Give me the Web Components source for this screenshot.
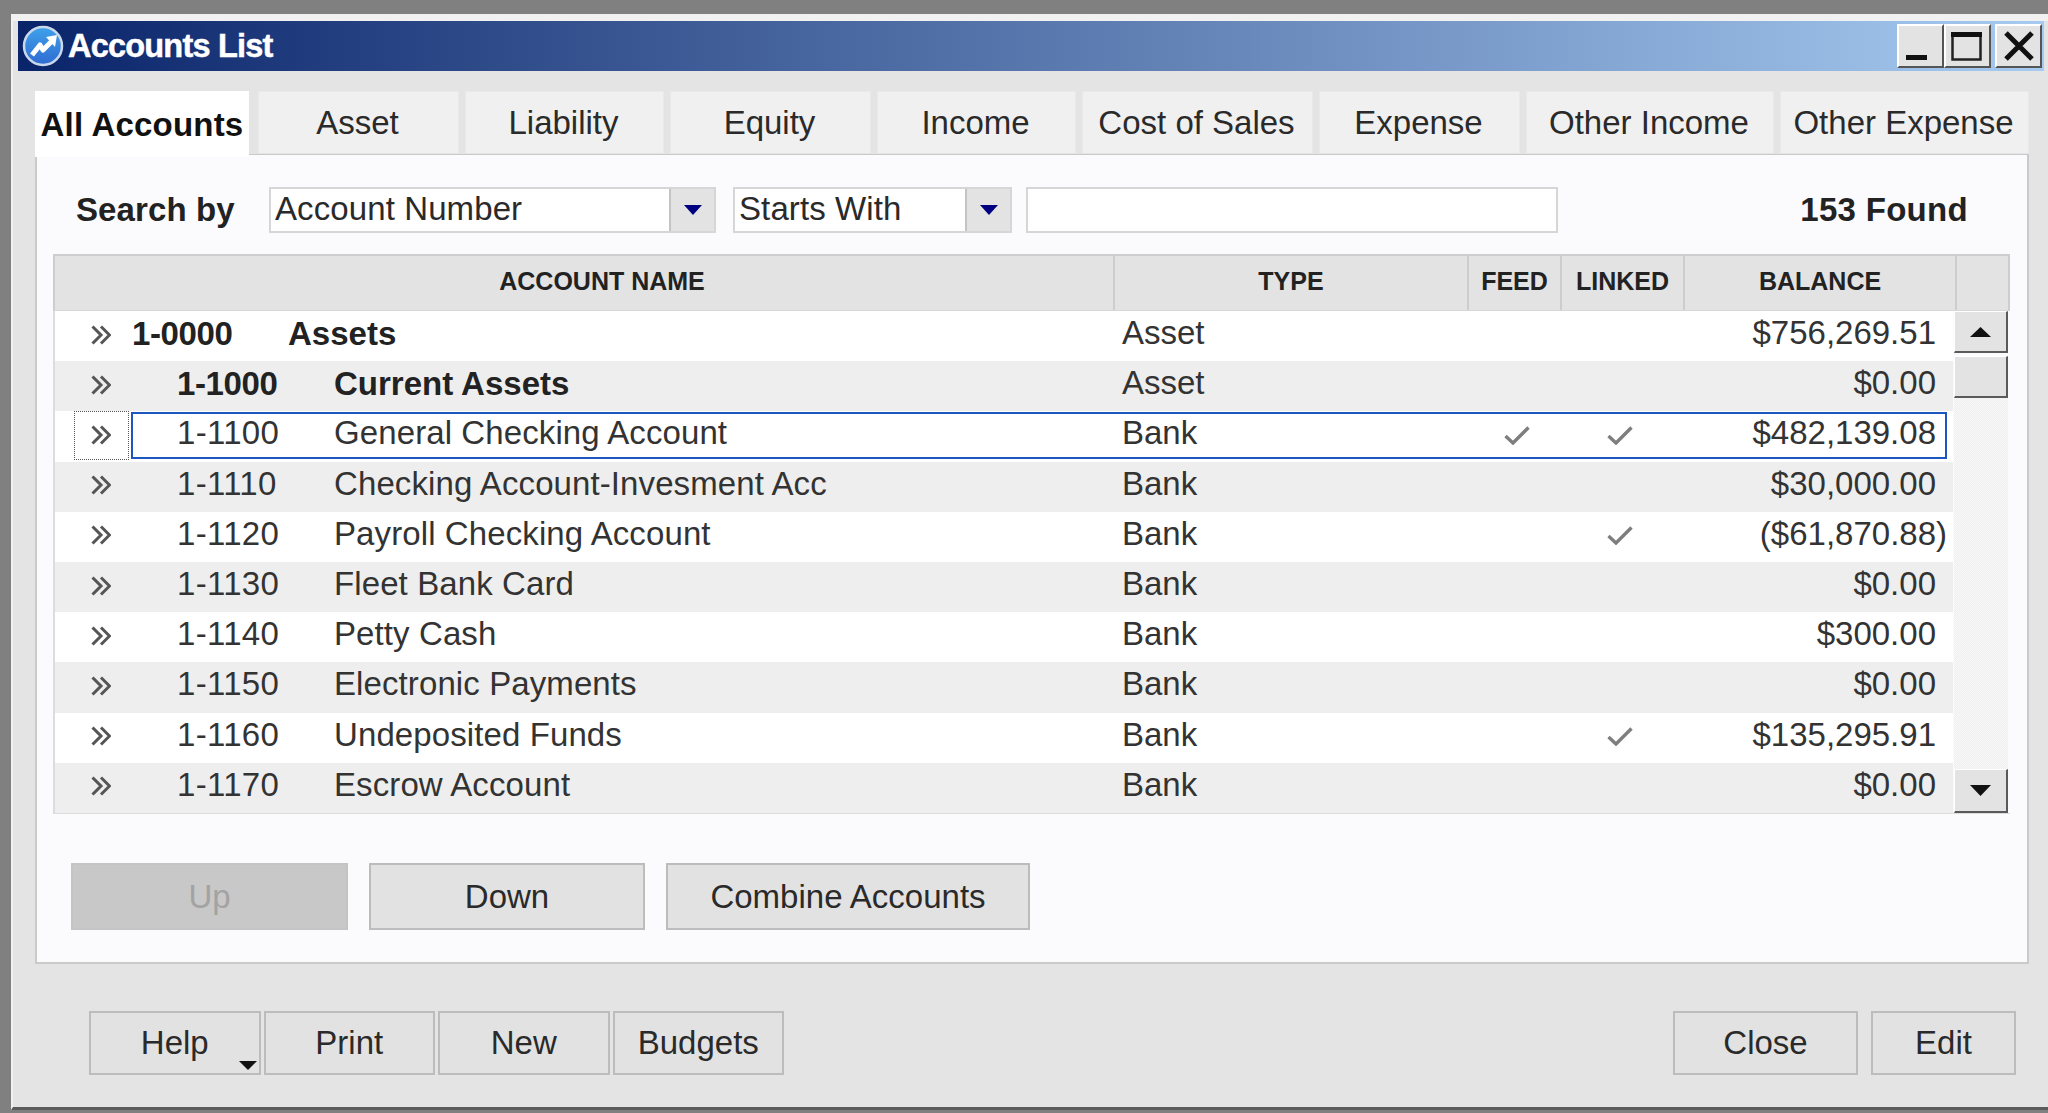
<!DOCTYPE html>
<html>
<head>
<meta charset="utf-8">
<title>Accounts List</title>
<style>
  html, body { margin: 0; height: 100%; overflow: hidden; }
  body { background: #808080; font: 33px "Liberation Sans", Arial, sans-serif; color: #222; }
</style>
</head>
<body>
<app-window heading="Accounts List">
  <tab-strip>
    <tab-item active style="--w:214px">All Accounts</tab-item>
    <tab-item style="--w:201px">Asset</tab-item>
    <tab-item style="--w:199px">Liability</tab-item>
    <tab-item style="--w:201px">Equity</tab-item>
    <tab-item style="--w:199px">Income</tab-item>
    <tab-item style="--w:231px">Cost of Sales</tab-item>
    <tab-item style="--w:201px">Expense</tab-item>
    <tab-item style="--w:248px">Other Income</tab-item>
    <tab-item style="--w:249px">Other Expense</tab-item>
  </tab-strip>
  <tab-panel>
    <search-bar found="153 Found"></search-bar>
    <account-table>
      <account-row level="1" number="1-0000" name="Assets" type="Asset" balance="$756,269.51"></account-row>
      <account-row level="2" number="1-1000" name="Current Assets" type="Asset" balance="$0.00"></account-row>
      <account-row selected number="1-1100" name="General Checking Account" type="Bank" feed linked balance="$482,139.08"></account-row>
      <account-row number="1-1110" name="Checking Account-Invesment Acc" type="Bank" balance="$30,000.00"></account-row>
      <account-row number="1-1120" name="Payroll Checking Account" type="Bank" linked negative balance="($61,870.88)"></account-row>
      <account-row number="1-1130" name="Fleet Bank Card" type="Bank" balance="$0.00"></account-row>
      <account-row number="1-1140" name="Petty Cash" type="Bank" balance="$300.00"></account-row>
      <account-row number="1-1150" name="Electronic Payments" type="Bank" balance="$0.00"></account-row>
      <account-row number="1-1160" name="Undeposited Funds" type="Bank" linked balance="$135,295.91"></account-row>
      <account-row number="1-1170" name="Escrow Account" type="Bank" balance="$0.00"></account-row>
    </account-table>
    <button-row style="--gap:21px;--left:18px;margin-top:49px">
      <ui-button disabled style="--w:277px;--h:67px">Up</ui-button>
      <ui-button style="--w:276px;--h:67px">Down</ui-button>
      <ui-button style="--w:364px;--h:67px">Combine Accounts</ui-button>
    </button-row>
  </tab-panel>
  <window-footer>
    <button-row slot="left" style="--gap:3px">
      <ui-button menu style="--w:171.5px;--h:64px">Help</ui-button>
      <ui-button style="--w:171.5px;--h:64px">Print</ui-button>
      <ui-button style="--w:171.5px;--h:64px">New</ui-button>
      <ui-button style="--w:171.5px;--h:64px">Budgets</ui-button>
    </button-row>
    <button-row slot="right" style="--gap:13px">
      <ui-button style="--w:185px;--h:64px">Close</ui-button>
      <ui-button style="--w:145px;--h:64px">Edit</ui-button>
    </button-row>
  </window-footer>
</app-window>

<script>
const shell = (el, html) => {
  const root = el.shadowRoot || el.attachShadow({ mode: "open" });
  root.innerHTML = html;
  return root;
};

class AppWindow extends HTMLElement {
  connectedCallback() {
    shell(this, `
      <style>
        :host {
          display: block;
          box-sizing: border-box;
          height: 1096px;
          margin: 14px 0 0 11px;
          background: #e4e4e4;
          border-top: 7px solid #f1f1f1;
          border-left: 2px solid #f1f1f1;
          border-bottom: 3px solid #5c5c5c;
        }
        header {
          display: flex;
          align-items: center;
          height: 50px;
          margin: 0 4px 20px 5px;
          background: linear-gradient(90deg, #0a246a, #a6caf0);
          color: #fff;
        }
        .logo { width: 44px; height: 44px; margin: 0 3px 0 3px; flex: none; }
        h1 {
          margin: 0;
          flex: 1;
          font: bold 32.5px/52px "Liberation Sans", Arial, sans-serif;
          letter-spacing: -.8px;
          -webkit-text-stroke: .5px #fff;
        }
        .caps { display: flex; margin-right: 2px; }
        .cap {
          box-sizing: border-box;
          width: 47px;
          height: 44px;
          background: #e3e3e3;
          border: 2px solid;
          border-color: #fff #555 #555 #fff;
          display: grid;
          place-items: center;
        }
        .cap.close { margin-left: 4px; }
        .cap svg { display: block; }
      </style>
      <header>
        <svg class="logo" viewBox="0 0 44 44">
          <defs><linearGradient id="lg" x1="0" y1="0" x2="0" y2="1"><stop offset="0" stop-color="#3fa2ea"/><stop offset="1" stop-color="#2f6bd2"/></linearGradient></defs>
          <circle cx="22" cy="22" r="19" fill="url(#lg)" stroke="#c9d8ea" stroke-width="2.5"/>
          <path d="M11 31 L19 21 L22 26 L30 18" fill="none" stroke="#fff" stroke-width="5" stroke-linejoin="round"/>
          <path d="M25 13 L36 11 L34 23 Z" fill="#fff"/>
        </svg>
        <h1>${this.getAttribute("heading")}</h1>
        <div class="caps">
          <div class="cap"><svg width="40" height="40" viewBox="0 0 40 40"><rect x="5" y="29" width="21" height="5" fill="#111"/></svg></div>
          <div class="cap"><svg width="40" height="40" viewBox="0 0 40 40"><path d="M4.5 7.5h28v26h-28z" fill="none" stroke="#222" stroke-width="2.5"/><rect x="3" y="6" width="31" height="5" fill="#111"/></svg></div>
          <div class="cap close"><svg width="40" height="40" viewBox="0 0 40 40"><path d="M7 7 L33 33 M33 7 L7 33" stroke="#111" stroke-width="5"/></svg></div>
        </div>
      </header>
      <slot></slot>
    `);
  }
}

class TabStrip extends HTMLElement {
  connectedCallback() {
    shell(this, `
      <style>
        :host { display: flex; gap: 6px; margin-left: 22px; height: 63px; position: relative; z-index: 1; align-items: flex-start; }
      </style>
      <slot></slot>
    `);
  }
}

class TabItem extends HTMLElement {
  connectedCallback() {
    shell(this, `
      <style>
        :host {
          display: block;
          box-sizing: border-box;
          flex: none;
          width: var(--w);
          height: 62px;
          padding-right: 2px;
          background: #f0f0f0;
          border: 1px solid #e9e9e9;
          border-bottom: 0;
          color: #2a2a2a;
          font-size: 33px;
          line-height: 62px;
          text-align: center;
          white-space: nowrap;
        }
        :host([active]) {
          height: 66px;
          padding-right: 0;
          background: #fff;
          border: 0;
          font-weight: bold;
          letter-spacing: .2px;
          line-height: 68px;
          color: #111;
          margin-right: 3px;
        }
      </style>
      <slot></slot>
    `);
  }
}

class TabPanel extends HTMLElement {
  connectedCallback() {
    shell(this, `
      <style>
        :host {
          display: block;
          box-sizing: border-box;
          width: 1994px;
          height: 810px;
          margin-left: 22px;
          padding: 32px 17px 0 16px;
          background: #fbfbfd;
          border: 2px solid #cacaca;
          border-top-width: 1px;
        }
      </style>
      <slot></slot>
    `);
  }
}

class ComboBox extends HTMLElement {
  connectedCallback() {
    shell(this, `
      <style>
        :host {
          display: flex;
          box-sizing: border-box;
          height: 46px;
          width: var(--w);
          background: #fff;
          border: 2px solid #d6d6d6;
          color: #2a2a2a;
        }
        .value { flex: 1; padding-left: 4px; line-height: 40px; font-size: 33px; white-space: nowrap; letter-spacing: .1px; }
        .drop {
          width: 43px;
          background: #e3e3e3;
          border-left: 2px solid #c4c4c4;
          display: grid;
          place-items: center;
        }
      </style>
      <div class="value"><slot></slot></div>
      <div class="drop"><svg width="18" height="10" viewBox="0 0 18 10"><path d="M0 0h18L9 10z" fill="#000080"/></svg></div>
    `);
  }
}

class SearchBar extends HTMLElement {
  connectedCallback() {
    shell(this, `
      <style>
        :host { display: flex; align-items: center; height: 46px; margin-bottom: 21px; }
        .label { width: 216px; padding-left: 23px; box-sizing: border-box; font-weight: bold; letter-spacing: .1px; color: #222; white-space: nowrap; }
        combo-box.a { --w: 447px; margin-right: 17px; }
        combo-box.b { --w: 279px; margin-right: 14px; }
        .text { box-sizing: border-box; width: 532px; height: 46px; background: #fff; border: 2px solid #d6d6d6; }
        .found { margin-left: auto; margin-right: 42px; font-weight: bold; letter-spacing: .3px; color: #222; white-space: nowrap; }
      </style>
      <div class="label">Search by</div>
      <combo-box class="a">Account Number</combo-box>
      <combo-box class="b">Starts With</combo-box>
      <div class="text"></div>
      <div class="found">${this.getAttribute("found")}</div>
    `);
  }
}

class AccountTable extends HTMLElement {
  connectedCallback() {
    shell(this, `
      <style>
        :host { display: block; box-sizing: border-box; width: 1957px; }
        .head {
          display: grid;
          grid-template-columns: 1060px 354px 93px 123px 272px 1fr;
          height: 57px;
          box-sizing: border-box;
          background: #e3e3e3;
          border: 2px solid #cdcdcd;
          border-bottom: 1px solid #d8d8d8;
          font: bold 25px/51px "Liberation Sans", Arial, sans-serif;
          color: #222;
          text-align: center;
        }
        .head div { border-right: 2px solid #cdcdcd; }
        .head div:first-child { padding-left: 36px; }
        .head div:last-child { border-right: 0; }
        .body { display: flex; height: 503px; box-sizing: border-box; border-bottom: 1px solid #dcdcdc; border-left: 2px solid #dcdcdc; }
        .rows { width: 1898px; flex: none; }
        scroll-rail { margin-left: 1px; }
      </style>
      <div class="head">
        <div>ACCOUNT NAME</div><div>TYPE</div><div>FEED</div><div>LINKED</div><div>BALANCE</div><div></div>
      </div>
      <div class="body">
        <div class="rows"><slot></slot></div>
        <scroll-rail></scroll-rail>
      </div>
    `);
  }
}

class AccountRow extends HTMLElement {
  connectedCallback() {
    const check = `<svg width="26" height="19" viewBox="0 0 26 19"><path d="M1.5 10 L9 17 L24.5 1.5" fill="none" stroke="#7e7e7e" stroke-width="3.4"/></svg>`;
    const level = this.getAttribute("level") || "3";
    shell(this, `
      <style>
        :host {
          display: grid;
          grid-template-columns: 77px 156px 825px 354px 100px 106px 280px;
          align-items: center;
          position: relative;
          height: 50.2px;
          background: #fff;
          color: #333;
          font-size: 33px;
          white-space: nowrap;
        }
        :host(:nth-child(even)) { background: #eeeeee; }
        .grip { margin: 0 0 3px 36px; display: block; width: 20px; height: 20px; }
        .num, .name, .type, .bal { padding-bottom: 6px; line-height: 38px; }
        .num { padding-left: ${level === "1" ? 0 : 45}px; letter-spacing: .3px; }
        .name { padding-left: ${level === "1" ? 0 : 46}px; letter-spacing: .1px; }
        .type { padding-left: 9px; }
        .mid { text-align: center; height: 19px; margin-top: -2px; }
        .mid svg { display: block; margin: 0 auto; }
        .bal { text-align: right; padding-right: 17px; }
        :host([negative]) .bal { padding-right: 6px; }
        :host([level]) .num, :host([level]) .name { font-weight: bold; color: #222; padding-bottom: 4px; letter-spacing: 0; }
        :host([level]) .num { letter-spacing: -.4px; }
        .sel { position: absolute; left: 76px; right: 6px; top: 1px; bottom: 3px; border: 2.5px solid #1e56c0; }
        .focus { position: absolute; left: 19px; width: 55px; top: 0; bottom: 2px; box-sizing: border-box; border: 1.5px dotted #555; }
      </style>
      ${this.hasAttribute("selected") ? `<div class="focus"></div><div class="sel"></div>` : ""}
      <svg class="grip" viewBox="0 0 20 20"><path d="M1.5 1.5 L10 10 L1.5 18.5 M10 1.5 L18.5 10 L10 18.5" fill="none" stroke="#555" stroke-width="3"/></svg>
      <div class="num">${this.getAttribute("number")}</div>
      <div class="name">${this.getAttribute("name")}</div>
      <div class="type">${this.getAttribute("type")}</div>
      <div class="mid">${this.hasAttribute("feed") ? check : ""}</div>
      <div class="mid">${this.hasAttribute("linked") ? check : ""}</div>
      <div class="bal">${this.getAttribute("balance")}</div>
    `);
  }
}

class ScrollRail extends HTMLElement {
  connectedCallback() {
    shell(this, `
      <style>
        :host { display: flex; flex-direction: column; width: 54px; height: 502px; }
        .btn {
          box-sizing: border-box;
          flex: none;
          background: #e3e3e3;
          border: 1px solid #fff;
          border-right: 2px solid #5a5a5a;
          border-bottom: 2px solid #5a5a5a;
          display: grid;
          place-items: center;
        }
        .up { height: 42px; }
        .thumb { height: 42px; margin-top: 3px; }
        .track { flex: 1; background: repeating-conic-gradient(#efefef 0 25%, #f8f8f8 0 50%) 0 0 / 2px 2px; }
        .down { height: 44px; }
      </style>
      <div class="btn up"><svg width="21" height="10" viewBox="0 0 21 10"><path d="M10.5 0L21 10H0z" fill="#111"/></svg></div>
      <div class="btn thumb"></div>
      <div class="track"></div>
      <div class="btn down"><svg width="21" height="11" viewBox="0 0 21 11"><path d="M0 0h21L10.5 11z" fill="#111"/></svg></div>
    `);
  }
}

class ButtonRow extends HTMLElement {
  connectedCallback() {
    shell(this, `
      <style>
        :host { display: flex; gap: var(--gap, 0); margin-left: var(--left, 0); }
      </style>
      <slot></slot>
    `);
  }
}

class UiButton extends HTMLElement {
  connectedCallback() {
    shell(this, `
      <style>
        :host {
          display: grid;
          place-items: center;
          position: relative;
          box-sizing: border-box;
          flex: none;
          width: var(--w);
          height: var(--h);
          background: #e2e2e2;
          border: 2px solid #bcbcbc;
          color: #2a2a2a;
          font-size: 33px;
          white-space: nowrap;
        }
        :host([disabled]) { background: #c8c8c8; border-color: #c4c4c4; color: #a3a3a3; }
        .menu { position: absolute; right: 2px; bottom: 3px; display: block; }
      </style>
      <slot></slot>
      ${this.hasAttribute("menu") ? `<svg class="menu" width="18" height="9" viewBox="0 0 18 9"><path d="M0 0h18L9 9z" fill="#111"/></svg>` : ""}
    `);
  }
}

class WindowFooter extends HTMLElement {
  connectedCallback() {
    shell(this, `
      <style>
        :host { display: flex; justify-content: space-between; margin: 47px 32px 0 76px; }
      </style>
      <slot name="left"></slot>
      <slot name="right"></slot>
    `);
  }
}

[
  ["combo-box", ComboBox],
  ["search-bar", SearchBar],
  ["scroll-rail", ScrollRail],
  ["account-table", AccountTable],
  ["account-row", AccountRow],
  ["button-row", ButtonRow],
  ["ui-button", UiButton],
  ["tab-strip", TabStrip],
  ["tab-item", TabItem],
  ["tab-panel", TabPanel],
  ["window-footer", WindowFooter],
  ["app-window", AppWindow],
].forEach(([name, cls]) => customElements.define(name, cls));
</script>
</body>
</html>
